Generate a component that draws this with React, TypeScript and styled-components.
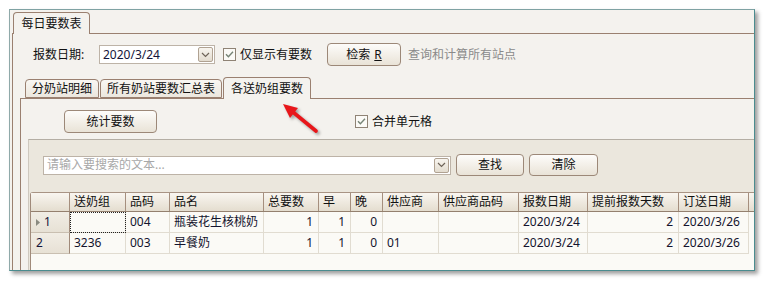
import React from "react";
import styled, { createGlobalStyle } from "styled-components";

const Global = createGlobalStyle`
  html, body { margin: 0; padding: 0; background: #ffffff; }
  body {
    width: 765px; height: 282px; overflow: hidden;
    font-family: "Noto Sans", "Noto Sans CJK SC", sans-serif;
    font-size: 12px; color: #111;
  }
  * { box-sizing: border-box; }
`;

const Stage = styled.div`
  position: relative;
  width: 765px;
  height: 282px;
  padding: 9px 0 0 9px;
`;

const Window = styled.div`
  width: 746px;
  height: 262px;
  border: 1px solid #4a8c8f;
  border-left-color: #8fa9a9;
  border-top-color: #7fa2a3;
  background: #f4f2ee;
  box-shadow: 3px 3px 4px rgba(0, 0, 0, 0.38);
  padding: 2px 0 0 2px;
  overflow: hidden;
  display: flex;
  flex-direction: column;
`;

const TabStrip = styled.div<{ $h: number; $indent: number }>`
  display: flex;
  align-items: flex-end;
  height: ${(p) => p.$h}px;
  padding-left: ${(p) => p.$indent}px;
  position: relative;
  z-index: 2;
  flex: none;
`;

const Tab = styled.div<{ $w: number; $active?: boolean; $gap?: number }>`
  width: ${(p) => p.$w}px;
  height: ${(p) => (p.$active ? 22 : 19)}px;
  margin-left: ${(p) => p.$gap ?? 0}px;
  margin-bottom: ${(p) => (p.$active ? -1 : 0)}px;
  border: 1px solid #9a8070;
  border-bottom: ${(p) => (p.$active ? "none" : "1px solid #9a8070")};
  border-radius: 4px 4px 0 0;
  background: ${(p) =>
    p.$active ? "#f4f2ee" : "linear-gradient(#f9f7f3, #ece7de)"};
  display: flex;
  align-items: center;
  justify-content: center;
  padding-top: ${(p) => (p.$active ? 1 : 0)}px;
  line-height: 16px;
  white-space: nowrap;
  color: #111;
`;

const Panel = styled.div<{ $pt: number }>`
  flex: 1;
  display: flex;
  flex-direction: column;
  border-top: 1px solid #9a8070;
  border-left: 1px solid #9a8070;
  padding-top: ${(p) => p.$pt}px;
  background: #f4f2ee;
  position: relative;
  z-index: 1;
  min-height: 0;
`;

const Row = styled.div<{ $pl?: number; $h: number }>`
  display: flex;
  align-items: center;
  height: ${(p) => p.$h}px;
  padding-left: ${(p) => p.$pl ?? 0}px;
  flex: none;
`;

const Label = styled.span`
  width: 66px;
  line-height: 16px;
  white-space: nowrap;
`;

const Combo = styled.div<{ $w: number }>`
  width: ${(p) => p.$w}px;
  height: 19px;
  border: 1px solid #bdb3a7;
  background: #fff;
  display: flex;
  align-items: center;
  justify-content: space-between;
  padding: 0 1px 0 3px;
  color: #14143a;
  line-height: 16px;
`;

const Placeholder = styled.span`
  color: #a8a8a8;
`;

const DropBtn = styled.div`
  width: 15px;
  height: 15px;
  border: 1px solid #b0a292;
  border-radius: 2px;
  background: linear-gradient(#f8f5ef, #e3dccf);
  display: flex;
  align-items: center;
  justify-content: center;
`;

const CheckWrap = styled.label<{ $ml: number }>`
  display: flex;
  align-items: center;
  margin-left: ${(p) => p.$ml}px;
  gap: 4px;
  line-height: 16px;
  white-space: nowrap;
`;

const Button = styled.div<{ $w: number; $h?: number; $ml?: number }>`
  width: ${(p) => p.$w}px;
  height: ${(p) => p.$h ?? 23}px;
  margin-left: ${(p) => p.$ml ?? 0}px;
  border: 1px solid #9c8878;
  border-radius: 4px;
  background: linear-gradient(#fdfcfa, #e9e3d7);
  display: flex;
  align-items: center;
  justify-content: center;
  line-height: 16px;
  white-space: nowrap;
  color: #111;
  flex: none;
`;

const Hint = styled.span`
  color: #8a8a8a;
  margin-left: 7px;
  line-height: 16px;
  white-space: nowrap;
`;

const Mnemonic = styled.span`
  text-decoration: underline;
  margin-left: 4px;
`;

const InnerArea = styled.div`
  flex: 1;
  display: flex;
  flex-direction: column;
  margin-top: 11px;
  margin-left: 7px;
  min-height: 0;
`;

const SearchPanel = styled.div`
  flex: 1;
  margin-top: 6px;
  margin-left: 7px;
  border-top: 1px solid #b4aea4;
  border-left: 1px solid #cfc9bf;
  background: #ebe7dd;
  display: flex;
  flex-direction: column;
  padding-top: 14px;
  min-height: 0;
`;

const GridBox = styled.div`
  flex: 1;
  margin-top: 16px;
  margin-left: 1px;
  border-top: 1px solid #a89484;
  border-left: 1px solid #a08a7a;
  border-top-left-radius: 3px;
  background: #fbfaf6;
  min-height: 0;
`;

const COLS = "39px 56px 44px 94px 55px 32px 32px 56px 80px 69px 91px 70px 1fr";

const HeadRow = styled.div`
  display: grid;
  grid-template-columns: ${COLS};
  height: 19px;
  background: linear-gradient(#f9f6f0, #e4ddcf);
  border-bottom: 1px solid #94806f;
`;

const HeadCell = styled.div`
  border-right: 1px solid #a58f7e;
  display: flex;
  align-items: center;
  padding-left: 4px;
  line-height: 16px;
  white-space: nowrap;
  overflow: hidden;
  color: #111;
  &:last-child { border-right: none; }
`;

const BodyRow = styled.div`
  display: grid;
  grid-template-columns: ${COLS};
  height: 21px;
`;

const RowHead = styled.div`
  background: linear-gradient(#f1ede5, #e7e1d5);
  border-right: 1px solid #a08a7a;
  border-bottom: 1px solid #c9bfb1;
  display: flex;
  align-items: center;
  padding-left: 5px;
  gap: 4px;
  color: #14143a;
  line-height: 16px;
`;

const Cell = styled.div<{ $num?: boolean; $focus?: boolean }>`
  border-right: 1px solid #e1dcd1;
  border-bottom: 1px solid #e1dcd1;
  display: flex;
  align-items: center;
  justify-content: ${(p) => (p.$num ? "flex-end" : "flex-start")};
  padding: 0 5px 0 4px;
  line-height: 16px;
  white-space: nowrap;
  overflow: hidden;
  color: #14142e;
  outline: ${(p) => (p.$focus ? "1px dotted #222" : "none")};
  outline-offset: -1px;
`;

const Filler = styled.div`
  border-bottom: none;
`;

const Arrow = styled.svg`
  position: absolute;
  left: 278px;
  top: 98px;
  z-index: 10;
  overflow: visible;
  filter: drop-shadow(2px 2px 1.5px rgba(0, 0, 0, 0.35));
`;

const Chevron = () => (
  <svg width="9" height="6" viewBox="0 0 9 6">
    <path d="M1 1 L4.5 4.5 L8 1" fill="none" stroke="#6e6458" strokeWidth="1.2" />
  </svg>
);

const Check = () => (
  <svg width="13" height="13" viewBox="0 0 13 13">
    <rect x="0.5" y="0.5" width="12" height="12" fill="#fbfaf7" stroke="#8f8375" />
    <path d="M3 6.3 L5.4 8.8 L10 3.8" fill="none" stroke="#768476" strokeWidth="1.4" />
  </svg>
);

const headers = [
  "",
  "送奶组",
  "品码",
  "品名",
  "总要数",
  "早",
  "晚",
  "供应商",
  "供应商品码",
  "报数日期",
  "提前报数天数",
  "订送日期",
  "",
];

type RowData = {
  idx: string;
  cur: boolean;
  group: string;
  code: string;
  name: string;
  total: string;
  am: string;
  pm: string;
  sup: string;
  supCode: string;
  date: string;
  days: string;
  ship: string;
};

const rows: RowData[] = [
  { idx: "1", cur: true, group: "", code: "004", name: "瓶装花生核桃奶", total: "1", am: "1", pm: "0", sup: "", supCode: "", date: "2020/3/24", days: "2", ship: "2020/3/26" },
  { idx: "2", cur: false, group: "3236", code: "003", name: "早餐奶", total: "1", am: "1", pm: "0", sup: "01", supCode: "", date: "2020/3/24", days: "2", ship: "2020/3/26" },
];

export default function App() {
  return (
    <>
      <Global />
      <Stage>
        <Window>
          <TabStrip $h={21} $indent={1}>
            <Tab $w={77} $active>每日要数表</Tab>
          </TabStrip>
          <Panel $pt={9}>
            <Row $h={23} $pl={20}>
              <Label>报数日期:</Label>
              <Combo $w={116}>
                <span>2020/3/24</span>
                <DropBtn><Chevron /></DropBtn>
              </Combo>
              <CheckWrap $ml={8}>
                <Check />
                <span>仅显示有要数</span>
              </CheckWrap>
              <Button $w={74} $ml={15}>
                检索<Mnemonic>R</Mnemonic>
              </Button>
              <Hint>查询和计算所有站点</Hint>
            </Row>
            <InnerArea>
              <TabStrip $h={21} $indent={5}>
                <Tab $w={74}>分奶站明细</Tab>
                <Tab $w={122} $gap={1}>所有奶站要数汇总表</Tab>
                <Tab $w={88} $gap={1} $active>各送奶组要数</Tab>
              </TabStrip>
              <Panel $pt={11}>
                <Row $h={23} $pl={43}>
                  <Button $w={93}>统计要数</Button>
                  <CheckWrap $ml={198}>
                    <Check />
                    <span>合并单元格</span>
                  </CheckWrap>
                </Row>
                <SearchPanel>
                  <Row $h={22} $pl={14}>
                    <Combo $w={408}>
                      <Placeholder>请输入要搜索的文本...</Placeholder>
                      <DropBtn><Chevron /></DropBtn>
                    </Combo>
                    <Button $w={68} $h={22} $ml={5}>查找</Button>
                    <Button $w={69} $h={22} $ml={5}>清除</Button>
                  </Row>
                  <GridBox>
                    <HeadRow>
                      {headers.map((h, i) => (
                        <HeadCell key={i}>{h}</HeadCell>
                      ))}
                    </HeadRow>
                    {rows.map((r) => (
                      <BodyRow key={r.idx}>
                        <RowHead>
                          {r.cur && (
                            <svg width="4" height="7" viewBox="0 0 4 7">
                              <path d="M0 0 L4 3.5 L0 7 Z" fill="#8a8a80" />
                            </svg>
                          )}
                          <span>{r.idx}</span>
                        </RowHead>
                        <Cell $focus={r.cur}>{r.group}</Cell>
                        <Cell>{r.code}</Cell>
                        <Cell>{r.name}</Cell>
                        <Cell $num>{r.total}</Cell>
                        <Cell $num>{r.am}</Cell>
                        <Cell $num>{r.pm}</Cell>
                        <Cell>{r.sup}</Cell>
                        <Cell>{r.supCode}</Cell>
                        <Cell>{r.date}</Cell>
                        <Cell $num>{r.days}</Cell>
                        <Cell>{r.ship}</Cell>
                        <Filler />
                      </BodyRow>
                    ))}
                  </GridBox>
                </SearchPanel>
              </Panel>
            </InnerArea>
          </Panel>
        </Window>
        <Arrow width="45" height="40" viewBox="0 0 45 40">
          <line x1="15.5" y1="14.5" x2="38" y2="33" stroke="#e8161a" strokeWidth="3.6" strokeLinecap="round" />
          <polygon points="5,6 20,10 12,20" fill="#e8161a" />
        </Arrow>
      </Stage>
    </>
  );
}
